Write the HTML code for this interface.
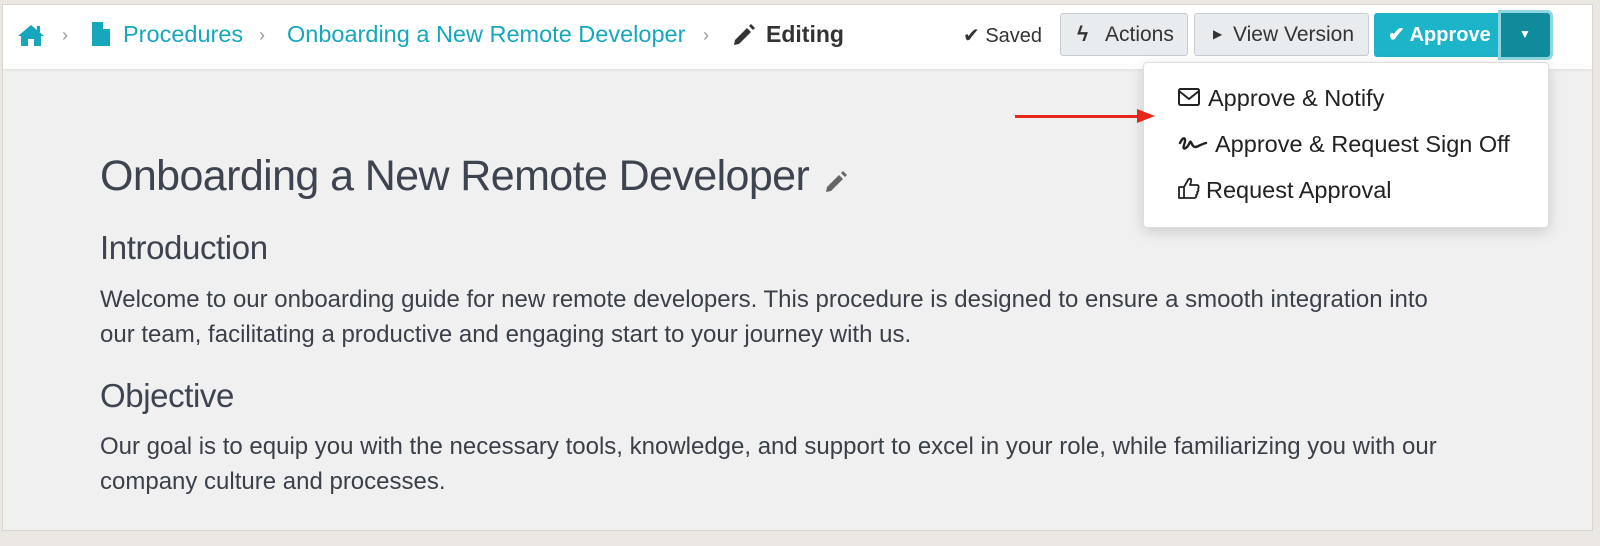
<!DOCTYPE html>
<html><head><meta charset="utf-8"><style>
body{margin:0;width:1600px;height:546px;background:#ebe7e3;font-family:"Liberation Sans",sans-serif;overflow:hidden;position:relative}
.frame{position:absolute;left:2px;top:4px;width:1591px;height:527px;background:#f0f0f1;border:1px solid #d8d4d0;box-sizing:border-box;overflow:hidden}
.bar{position:absolute;left:0;top:0;right:0;height:64px;background:#fff;box-shadow:0 1px 3px rgba(0,0,0,.08)}
.t{position:absolute;white-space:nowrap}
.teal{color:#17a7bd}
.btn{position:absolute;top:8px;height:43px;border:1px solid #c9ccd1;background:#e9ecef;border-radius:3px;box-sizing:border-box;font-size:21px;color:#333;line-height:41px}
.menu{position:absolute;left:1140px;top:57px;width:404px;height:164px;background:#fff;border:1px solid #ddd;border-radius:4px;box-shadow:0 4px 14px rgba(0,0,0,.15)}
.mi{position:absolute;left:34px;font-size:23.5px;color:#222;white-space:nowrap}
.body{font-size:24px;color:#3a3f48;line-height:35px}
</style></head><body>
<div class="frame">
 <div class="bar">
  <svg class="t" style="left:14px;top:18px" width="28" height="24" viewBox="0 0 28 24"><path d="M14 2 L1 13 L4 13 L4 23 L11 23 L11 16 L17 16 L17 23 L24 23 L24 13 L27 13 Z" fill="#17a7bd"/><rect x="20" y="3" width="3" height="6" fill="#17a7bd"/></svg>
  <span class="t" style="left:59px;top:20px;color:#999;font-size:18px">›</span>
  <svg class="t" style="left:89px;top:17px" width="18" height="24" viewBox="0 0 18 24"><path d="M0 0 H11 L18 7 V24 H0 Z" fill="#17a7bd"/><path d="M11 0 V7 H18" fill="#fff"/></svg>
  <span class="t teal" style="left:120px;top:16px;font-size:23.5px">Procedures</span>
  <span class="t" style="left:256px;top:20px;color:#999;font-size:18px">›</span>
  <span class="t teal" style="left:284px;top:16px;font-size:23.5px">Onboarding a New Remote Developer</span>
  <span class="t" style="left:700px;top:20px;color:#999;font-size:18px">›</span>
  <svg class="t" style="left:729px;top:18px" width="24" height="24" viewBox="0 0 24 24"><path d="M3 17 L15 5 L19 9 L7 21 L2 22 Z" fill="#333"/><path d="M17 3 L19 1 L23 5 L21 7 Z" fill="#333"/></svg>
  <span class="t" style="left:763px;top:16px;font-size:23px;font-weight:bold;color:#333">Editing</span>
  <span class="t" style="left:960px;top:18px;font-size:20px;color:#333">✔ Saved</span>
  <div class="btn" style="left:1057px;width:128px"><span style="position:absolute;left:16px;font-weight:bold">ϟ</span><span style="position:absolute;left:44px">Actions</span></div>
  <div class="btn" style="left:1191px;width:175px"><span style="position:absolute;left:18px;font-size:12px">▶</span><span style="position:absolute;left:38px">View Version</span></div>
  <div style="position:absolute;left:1371px;top:8px;width:176px;height:44px;background:#1cb4c9;border-radius:3px;color:#fff;font-size:20px;font-weight:bold;line-height:44px">
   <span style="position:absolute;left:14px">✔ Approve</span>
   <div style="position:absolute;left:127px;top:0;width:49px;height:44px;background:#0f8b9b;border-radius:0 3px 3px 0;box-shadow:0 0 0 3px #8fd6e0"><span style="position:absolute;left:18px;top:-1px;font-size:12px">▼</span></div>
  </div>
 </div>
 <div class="menu">
  <svg style="position:absolute;left:34px;top:25px" width="22" height="18" viewBox="0 0 22 18"><rect x="1" y="1" width="20" height="16" rx="1.5" fill="none" stroke="#222" stroke-width="2"/><path d="M1 3 L11 11 L21 3" fill="none" stroke="#222" stroke-width="2"/></svg>
  <span class="mi" style="left:64px;top:22px">Approve &amp; Notify</span>
  <svg style="position:absolute;left:34px;top:72px" width="30" height="18" viewBox="0 0 30 18"><path d="M2 8 C5 1 9 2 6 10 C4 16 9 14 12 7 C13 5 14 12 17 12 C20 12 23 9 28 8" fill="none" stroke="#222" stroke-width="2.4" stroke-linecap="round"/></svg>
  <span class="mi" style="left:71px;top:68px">Approve &amp; Request Sign Off</span>
  <svg style="position:absolute;left:34px;top:114px" width="22" height="22" viewBox="0 0 22 22"><path d="M1 10 H6 V21 H1 Z M6 10 L10 3 C11 1 14 1 13 5 L12 8 H19 C21 8 21 11 20 12 C21 13 20 15 19 15 C20 16 19 18 18 18 C19 19 18 21 16 21 H6" fill="none" stroke="#222" stroke-width="1.8" stroke-linejoin="round"/></svg>
  <span class="mi" style="left:62px;top:114px">Request Approval</span>
 </div>
 <div style="position:absolute;left:1012px;top:110px;width:124px;height:3px;background:#e8261a"></div>
 <div style="position:absolute;left:1134px;top:104px;width:0;height:0;border-left:18px solid #e8261a;border-top:7px solid transparent;border-bottom:7px solid transparent"></div>
 <div class="t" style="left:97px;top:147px;font-size:43px;color:#3d4450;letter-spacing:-0.6px">Onboarding a New Remote Developer</div>
 <svg class="t" style="left:821px;top:165px" width="24" height="24" viewBox="0 0 24 24"><path d="M3 17 L15 5 L19 9 L7 21 L2 22 Z" fill="#666"/><path d="M17 3 L19 1 L23 5 L21 7 Z" fill="#666"/></svg>
 <div class="t" style="left:97px;top:224px;font-size:33px;color:#3d4450;letter-spacing:-0.4px">Introduction</div>
 <div class="t body" style="left:97px;top:277px">Welcome to our onboarding guide for new remote developers. This procedure is designed to ensure a smooth integration into<br>our team, facilitating a productive and engaging start to your journey with us.</div>
 <div class="t" style="left:97px;top:372px;font-size:33px;color:#3d4450;letter-spacing:-0.4px">Objective</div>
 <div class="t body" style="left:97px;top:424px">Our goal is to equip you with the necessary tools, knowledge, and support to excel in your role, while familiarizing you with our<br>company culture and processes.</div>
</div>
</body></html>
